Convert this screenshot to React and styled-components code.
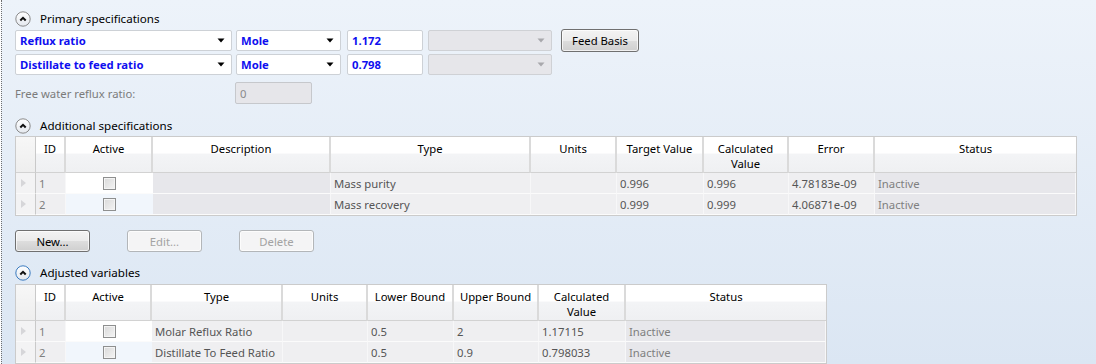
import React from "react";
import styled, { createGlobalStyle, css } from "styled-components";

const GlobalStyle = createGlobalStyle`
  html, body {
    margin: 0;
    padding: 0;
  }
  body {
    font-family: "Segoe UI", "Noto Sans", sans-serif;
    font-size: 11.3px;
    color: #000;
  }
`;

const additionalCols = [
  { key: "rh", width: 20 },
  { key: "id", label: "ID", width: 30 },
  { key: "active", label: "Active", width: 87 },
  { key: "desc", label: "Description", width: 178 },
  { key: "type", label: "Type", width: 200 },
  { key: "units", label: "Units", width: 86 },
  { key: "target", label: "Target Value", width: 87 },
  { key: "calc", label: "Calculated Value", width: 85 },
  { key: "error", label: "Error", width: 86 },
  { key: "status", label: "Status", width: 201 },
];

const additionalRows = [
  { id: "1", desc: "", type: "Mass purity", units: "", target: "0.996", calc: "0.996", error: "4.78183e-09", status: "Inactive" },
  { id: "2", desc: "", type: "Mass recovery", units: "", target: "0.999", calc: "0.999", error: "4.06871e-09", status: "Inactive" },
];

const adjustedCols = [
  { key: "rh", width: 20 },
  { key: "id", label: "ID", width: 30 },
  { key: "active", label: "Active", width: 86 },
  { key: "type", label: "Type", width: 131 },
  { key: "units", label: "Units", width: 85 },
  { key: "lower", label: "Lower Bound", width: 86 },
  { key: "upper", label: "Upper Bound", width: 85 },
  { key: "calc", label: "Calculated Value", width: 87 },
  { key: "status", label: "Status", width: 200 },
];

const adjustedRows = [
  { id: "1", type: "Molar Reflux Ratio", units: "", lower: "0.5", upper: "2", calc: "1.17115", status: "Inactive" },
  { id: "2", type: "Distillate To Feed Ratio", units: "", lower: "0.5", upper: "0.9", calc: "0.798033", status: "Inactive" },
];

const darkCells = ["desc", "status"];

function CollapseIcon({ focused }) {
  const ring = focused ? "#3b7bbf" : "#8b8b8b";
  const id = focused ? "gf" : "gn";
  return (
    <svg width="16" height="16" viewBox="0 0 16 16">
      <defs>
        <linearGradient id={id} x1="0" y1="0" x2="0" y2="1">
          <stop offset="0" stopColor="#ffffff" />
          <stop offset="1" stopColor="#e4e8ee" />
        </linearGradient>
      </defs>
      <circle cx="8" cy="8" r="7.2" fill={`url(#${id})`} stroke={ring} strokeWidth="1" />
      <path d="M5.3 9.5 L8 6.8 L10.7 9.5" fill="none" stroke="#111" strokeWidth="2" />
    </svg>
  );
}

function DropArrow({ disabled }) {
  return (
    <ArrowBox>
      <svg width="8" height="5" viewBox="0 0 8 5">
        <polygon points="0.5,0.5 7.5,0.5 4,4.5" fill={disabled ? "#a8a8ac" : "#000"} />
      </svg>
    </ArrowBox>
  );
}

function RowArrow() {
  return (
    <svg width="5" height="8" viewBox="0 0 5 8">
      <polygon points="0,0 5,4 0,8" fill="#d6d6d9" />
    </svg>
  );
}

function Grid({ cols, rows }) {
  const template = cols.map((c) => `${c.width}px`).join(" ");
  return (
    <Table $template={template}>
      {cols.map((c, i) => (
        <HeadCell key={c.key} $first={c.key === "rh"} $last={i === cols.length - 1}>
          {c.label}
        </HeadCell>
      ))}
      {rows.map((r, i) =>
        cols.map((c) => {
          if (c.key === "rh")
            return (
              <RowHead key={c.key + i}>
                <RowArrow />
              </RowHead>
            );
          if (c.key === "active")
            return (
              <CheckCell key={c.key + i} $alt={i % 2 === 1}>
                <Check />
              </CheckCell>
            );
          return (
            <Cell
              key={c.key + i}
              $dark={darkCells.includes(c.key)}
              $muted={c.key === "status" || c.key === "id"}
            >
              {r[c.key]}
            </Cell>
          );
        })
      )}
    </Table>
  );
}

export default function App() {
  return (
    <>
      <GlobalStyle />
      <Page>
        <SectionHeader $top={0} $bottom={3}>
          <CollapseIcon />
          <span>Primary specifications</span>
        </SectionHeader>

        <SpecRows>
          <SpecRow>
            <Combo $w={217}>
              Reflux ratio
              <DropArrow />
            </Combo>
            <Combo $w={105}>
              Mole
              <DropArrow />
            </Combo>
            <ValueInput $w={76}>1.172</ValueInput>
            <Combo $w={124} $disabled>
              <DropArrow disabled />
            </Combo>
            <Button $w={78} $h={23} $lift>
              Feed Basis
            </Button>
          </SpecRow>
          <SpecRow>
            <Combo $w={217}>
              Distillate to feed ratio
              <DropArrow />
            </Combo>
            <Combo $w={105}>
              Mole
              <DropArrow />
            </Combo>
            <ValueInput $w={76}>0.798</ValueInput>
            <Combo $w={124} $disabled>
              <DropArrow disabled />
            </Combo>
          </SpecRow>
        </SpecRows>

        <FreeWaterRow>
          <FieldLabel>Free water reflux ratio:</FieldLabel>
          <ValueInput $w={77} $disabled>
            0
          </ValueInput>
        </FreeWaterRow>

        <SectionHeader $top={13} $bottom={2}>
          <CollapseIcon />
          <span>Additional specifications</span>
        </SectionHeader>
        <Grid cols={additionalCols} rows={additionalRows} />

        <ButtonRow>
          <Button $w={75} $h={22}>
            New...
          </Button>
          <Button $w={75} $h={22} $disabled>
            Edit...
          </Button>
          <Button $w={75} $h={22} $disabled>
            Delete
          </Button>
        </ButtonRow>

        <SectionHeader $top={12} $bottom={3}>
          <CollapseIcon focused />
          <span>Adjusted variables</span>
        </SectionHeader>
        <Grid cols={adjustedCols} rows={adjustedRows} />
      </Page>
    </>
  );
}

const Page = styled.div`
  width: 1095px;
  height: 364px;
  box-sizing: border-box;
  margin-left: 1px;
  border-left: 1px dotted #6f6f6f;
  background: linear-gradient(#edf3fa, #dbe6f3);
  padding: 10px 0 0 13px;
  overflow: hidden;
`;

const SectionHeader = styled.div`
  display: flex;
  align-items: center;
  gap: 9px;
  height: 17px;
  margin-top: ${(p) => p.$top}px;
  margin-bottom: ${(p) => p.$bottom}px;
  font-size: 11.6px;
  span {
    line-height: 17px;
  }
`;

const SpecRows = styled.div`
  display: flex;
  flex-direction: column;
  gap: 3px;
`;

const SpecRow = styled.div`
  display: flex;
  align-items: flex-start;
  height: 21px;
  gap: 4px;
`;

const fieldBase = css`
  box-sizing: border-box;
  height: 21px;
  width: ${(p) => p.$w}px;
  border: 1px solid #cdd1d6;
  border-radius: 2px;
  display: flex;
  align-items: center;
  padding-left: 4px;
  font-weight: bold;
  color: #0f0fef;
  background: #fff;
`;

const Combo = styled.div`
  ${fieldBase}
  position: relative;
  &:nth-child(3),
  &:nth-child(4) {
    margin-left: 1px;
  }
  ${(p) =>
    p.$disabled &&
    css`
      background: #e6e6ea;
      border-color: #cfd1d5;
    `}
`;

const ArrowBox = styled.span`
  margin-left: auto;
  width: 20px;
  height: 100%;
  display: flex;
  align-items: center;
  justify-content: center;
`;

const ValueInput = styled.div`
  ${fieldBase}
  margin-left: 2px;
  ${(p) =>
    p.$disabled &&
    css`
      margin-left: 0;
      background: #e6e6ea;
      border-color: #c6c8cc;
      color: #8a8a8a;
      font-weight: normal;
      height: 22px;
    `}
`;

const FreeWaterRow = styled.div`
  display: flex;
  align-items: center;
  margin-top: 7px;
  height: 22px;
`;

const FieldLabel = styled.span`
  width: 220px;
  color: #7b7b7b;
`;

const Button = styled.button`
  box-sizing: border-box;
  width: ${(p) => p.$w}px;
  height: ${(p) => p.$h}px;
  margin-left: ${(p) => (p.$lift ? 5 : 0)}px;
  margin-top: ${(p) => (p.$lift ? -1 : 0)}px;
  font: inherit;
  color: #000;
  padding: 0;
  border: 1px solid #707070;
  border-radius: 3px;
  background: linear-gradient(#f3f3f3 0%, #ebebeb 50%, #dddddd 51%, #cfcfcf 100%);
  box-shadow: inset 0 0 0 1px rgba(255, 255, 255, 0.7);
  ${(p) =>
    p.$disabled &&
    css`
      color: #a3a3a3;
      border-color: #b3b6b9;
      background: #f4f4f5;
    `}
`;

const ButtonRow = styled.div`
  display: flex;
  gap: 37px;
  margin-top: 14px;
`;

const Table = styled.div`
  display: grid;
  grid-template-columns: ${(p) => p.$template};
  grid-template-rows: 36px 21px 21px;
  width: max-content;
  box-sizing: border-box;
  border: 1px solid #cbcbcb;
  background: #fff;
`;

const HeadCell = styled.div`
  box-sizing: border-box;
  background: linear-gradient(#ffffff 0%, #ffffff 45%, #f3f4f6 50%, #eff0f2 100%);
  border-right: ${(p) => (p.$last ? "none" : "2px solid #dadada")};
  border-bottom: 1px solid #d2d2d2;
  text-align: center;
  padding: 4px 4px 0;
  line-height: 15px;
  ${(p) =>
    p.$first &&
    css`
      background: linear-gradient(#f7f7f7, #eeeeee);
      border-right: 1px solid #c9c9c9;
    `}
`;

const RowHead = styled.div`
  box-sizing: border-box;
  background: #f3f3f4;
  border-right: 1px solid #c9c9c9;
  border-bottom: 1px solid #fafafa;
  display: flex;
  align-items: center;
  padding-left: 5px;
`;

const Cell = styled.div`
  box-sizing: border-box;
  background: ${(p) => (p.$dark ? "#e7e7eb" : "#efeff1")};
  border-right: 1px solid #f7f7f8;
  border-bottom: 1px solid #fbfbfb;
  color: ${(p) => (p.$muted ? "#7f7f7f" : "#555")};
  padding-left: 3px;
  line-height: 21px;
  white-space: nowrap;
  overflow: hidden;
`;

const CheckCell = styled.div`
  box-sizing: border-box;
  background: ${(p) => (p.$alt ? "#f1f6fc" : "#ffffff")};
  border-bottom: 1px solid #fbfbfb;
  display: flex;
  align-items: center;
  justify-content: center;
`;

const Check = styled.span`
  box-sizing: border-box;
  width: 13px;
  height: 13px;
  border: 1px solid #8e8f8f;
  background: linear-gradient(135deg, #d9d9d9, #f4f4f4);
  box-shadow: inset 0 0 0 1px #f4f4f4;
`;
